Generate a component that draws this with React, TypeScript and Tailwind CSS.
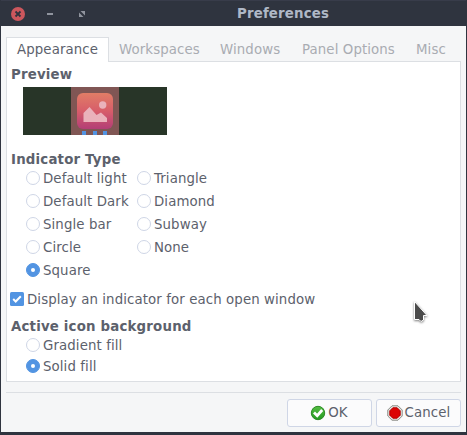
import type { ReactNode } from "react";

function Radio({ label, checked = false, className = "h-[23px]" }: { label: string; checked?: boolean; className?: string }) {
  return (
    <label className={`flex items-start gap-[3px] pt-1 ${className}`}>
      <span
        className={`flex size-[14px] shrink-0 items-center justify-center rounded-full border ${
          checked ? "border-[#5294e2] bg-[#5294e2]" : "border-[#cfd6e6] bg-white"
        }`}
      >
        {checked && <span className="size-1 rounded-full bg-white" />}
      </span>
      <span>{label}</span>
    </label>
  );
}

function Heading({ children, className = "" }: { children: ReactNode; className?: string }) {
  return <h2 className={`h-4 leading-[18px] font-bold tracking-[0.19px] ${className}`}>{children}</h2>;
}

function TitleBar() {
  return (
    <header className="flex h-[26px] shrink-0 items-center border-t border-[#383c4a] bg-[#2f343f] text-[#afb8c6]">
      <svg className="ml-[10px]" width="14" height="14" viewBox="0 0 14 14">
        <circle cx="7" cy="7" r="7" fill="#cc575d" />
        <path d="M4.5 4.5l5 5M9.5 4.5l-5 5" stroke="#2f343f" strokeWidth="1.8" />
      </svg>
      <span className="ml-[22px] h-[2px] w-[6px] bg-[#90949e]" />
      <svg className="ml-[26px]" width="6" height="6" viewBox="0 0 6 6" fill="#90949e">
        <path d="M1.5 0H6V4.5zM0 1.5L4.5 6H0z" />
      </svg>
      <h1 className="ml-[152px] font-bold tracking-[0.17px]">Preferences</h1>
    </header>
  );
}

function Tabs() {
  return (
    <nav className="relative -mb-px flex h-[25px] text-[#a9acb2]">
      <span className="w-[103px] border border-b-0 border-[#dcdfe3] bg-white pt-1 pl-[10px] text-[#5c616c]">Appearance</span>
      <span className="ml-[10px] w-[101px] pt-[5px]">Workspaces</span>
      <span className="w-[82px] pt-[5px]">Windows</span>
      <span className="w-[114px] pt-[5px]">Panel Options</span>
      <span className="pt-[5px]">Misc</span>
    </nav>
  );
}

function Preview() {
  return (
    <svg className="mt-[5px] ml-3 block" width="144" height="48" viewBox="0 0 144 48">
      <defs>
        <linearGradient id="tile" x1="0" y1="0" x2="0" y2="1">
          <stop offset="0" stopColor="#e17d66" />
          <stop offset="0.5" stopColor="#d75d6a" />
          <stop offset="1" stopColor="#b33e76" />
        </linearGradient>
      </defs>
      <path fill="#283528" d="M0 0h144v48H0z" />
      <path fill="#805654" d="M48 0h48v48H48z" />
      <rect x="54" y="6" width="36" height="36" rx="6" fill="url(#tile)" />
      <circle cx="79.7" cy="18" r="3.7" fill="#eab2bb" />
      <path d="M60.5 35V26L66.5 20l7 8 4.5-2.5L84 31v4z" fill="#eab2bb" />
      <path d="M59 44h4v4h-4zM70 44h4v4h-4zM80 44h4v4h-4z" fill="#5294e2" />
    </svg>
  );
}

function DialogButton({ icon, children, className = "" }: { icon: ReactNode; children: ReactNode; className?: string }) {
  return (
    <button
      className={`flex h-[28px] w-[85px] items-center justify-center gap-[2px] rounded-[3px] border border-[#cfd6e6] bg-[#fbfbfc] ${className}`}
    >
      {icon}
      <span>{children}</span>
    </button>
  );
}

function OkIcon() {
  return (
    <svg width="16" height="16" viewBox="0 0 16 16">
      <defs>
        <linearGradient id="ok" x1="0" y1="0" x2="0" y2="1">
          <stop offset="0" stopColor="#55bd43" />
          <stop offset="1" stopColor="#249a20" />
        </linearGradient>
      </defs>
      <circle cx="8" cy="8" r="6.7" fill="url(#ok)" stroke="#2c8a26" />
      <path d="M4 7.5l3.2 3.2L12.2 5" fill="none" stroke="#fff" strokeWidth="2.8" />
    </svg>
  );
}

function StopIcon() {
  return (
    <svg width="16" height="16" viewBox="0 0 16 16">
      <path d="M5 .8h6L15.2 5v6L11 15.2H5L.8 11V5z" fill="#ecece8" stroke="#888a85" />
      <path d="M5.8 2.8h4.4l3 3v4.4l-3 3H5.8l-3-3V5.8z" fill="#dc0505" stroke="#b40000" />
    </svg>
  );
}

export default function App() {
  return (
    <div className="relative flex h-[435px] w-[467px] flex-col overflow-hidden border-r border-b-[3px] border-l border-[#2f343f] bg-[#f5f6f7] font-['DejaVu_Sans',sans-serif] text-[13.333px] leading-4 tracking-[0.1px] whitespace-nowrap text-[#5c616c]">
      <TitleBar />
      <div className="px-[5px] pt-[11px]">
        <Tabs />
        <main className="h-[321px] border border-[#dcdfe3] bg-white px-1">
          <Heading className="mt-1">Preview</Heading>
          <Preview />
          <Heading className="mt-4">Indicator Type</Heading>
          <div className="ml-[15px] grid grid-cols-[111px_auto] justify-start">
            <Radio label="Default light" />
            <Radio label="Triangle" />
            <Radio label="Default Dark" />
            <Radio label="Diamond" />
            <Radio label="Single bar" />
            <Radio label="Subway" />
            <Radio label="Circle" />
            <Radio label="None" />
            <Radio label="Square" checked />
          </div>
          <label className="-ml-px mt-[9px] flex h-4 items-center gap-[3px]">
            <svg width="14" height="14" viewBox="0 0 14 14">
              <rect width="14" height="14" rx="1.5" fill="#5294e2" />
              <path d="M3.2 7l2.5 2.5L10.8 4.3" fill="none" stroke="#fff" strokeWidth="2" />
            </svg>
            <span className="pt-0.5">Display an indicator for each open window</span>
          </label>
          <Heading className="mt-[11px]">Active icon background</Heading>
          <div className="ml-[15px]">
            <Radio label="Gradient fill" className="h-[21px]" />
            <Radio label="Solid fill" checked className="h-[21px]" />
          </div>
        </main>
        <footer className="mt-[10px] flex justify-end gap-1 border-t border-[#dcdfe3] pt-[6px]">
          <DialogButton icon={<OkIcon />} className="pr-px">OK</DialogButton>
          <DialogButton icon={<StopIcon />}>Cancel</DialogButton>
        </footer>
      </div>
      <svg className="absolute top-[298px] left-[410px] drop-shadow-[0_1px_1px_rgba(0,0,0,0.5)]" width="20" height="28" viewBox="0 0 20 28">
        <path d="M3.5 3.5v18H8l2 2 2.5-1.5v-4.5H16z" fill="#4b4b4b" stroke="#fff" strokeLinejoin="round" />
      </svg>
    </div>
  );
}
